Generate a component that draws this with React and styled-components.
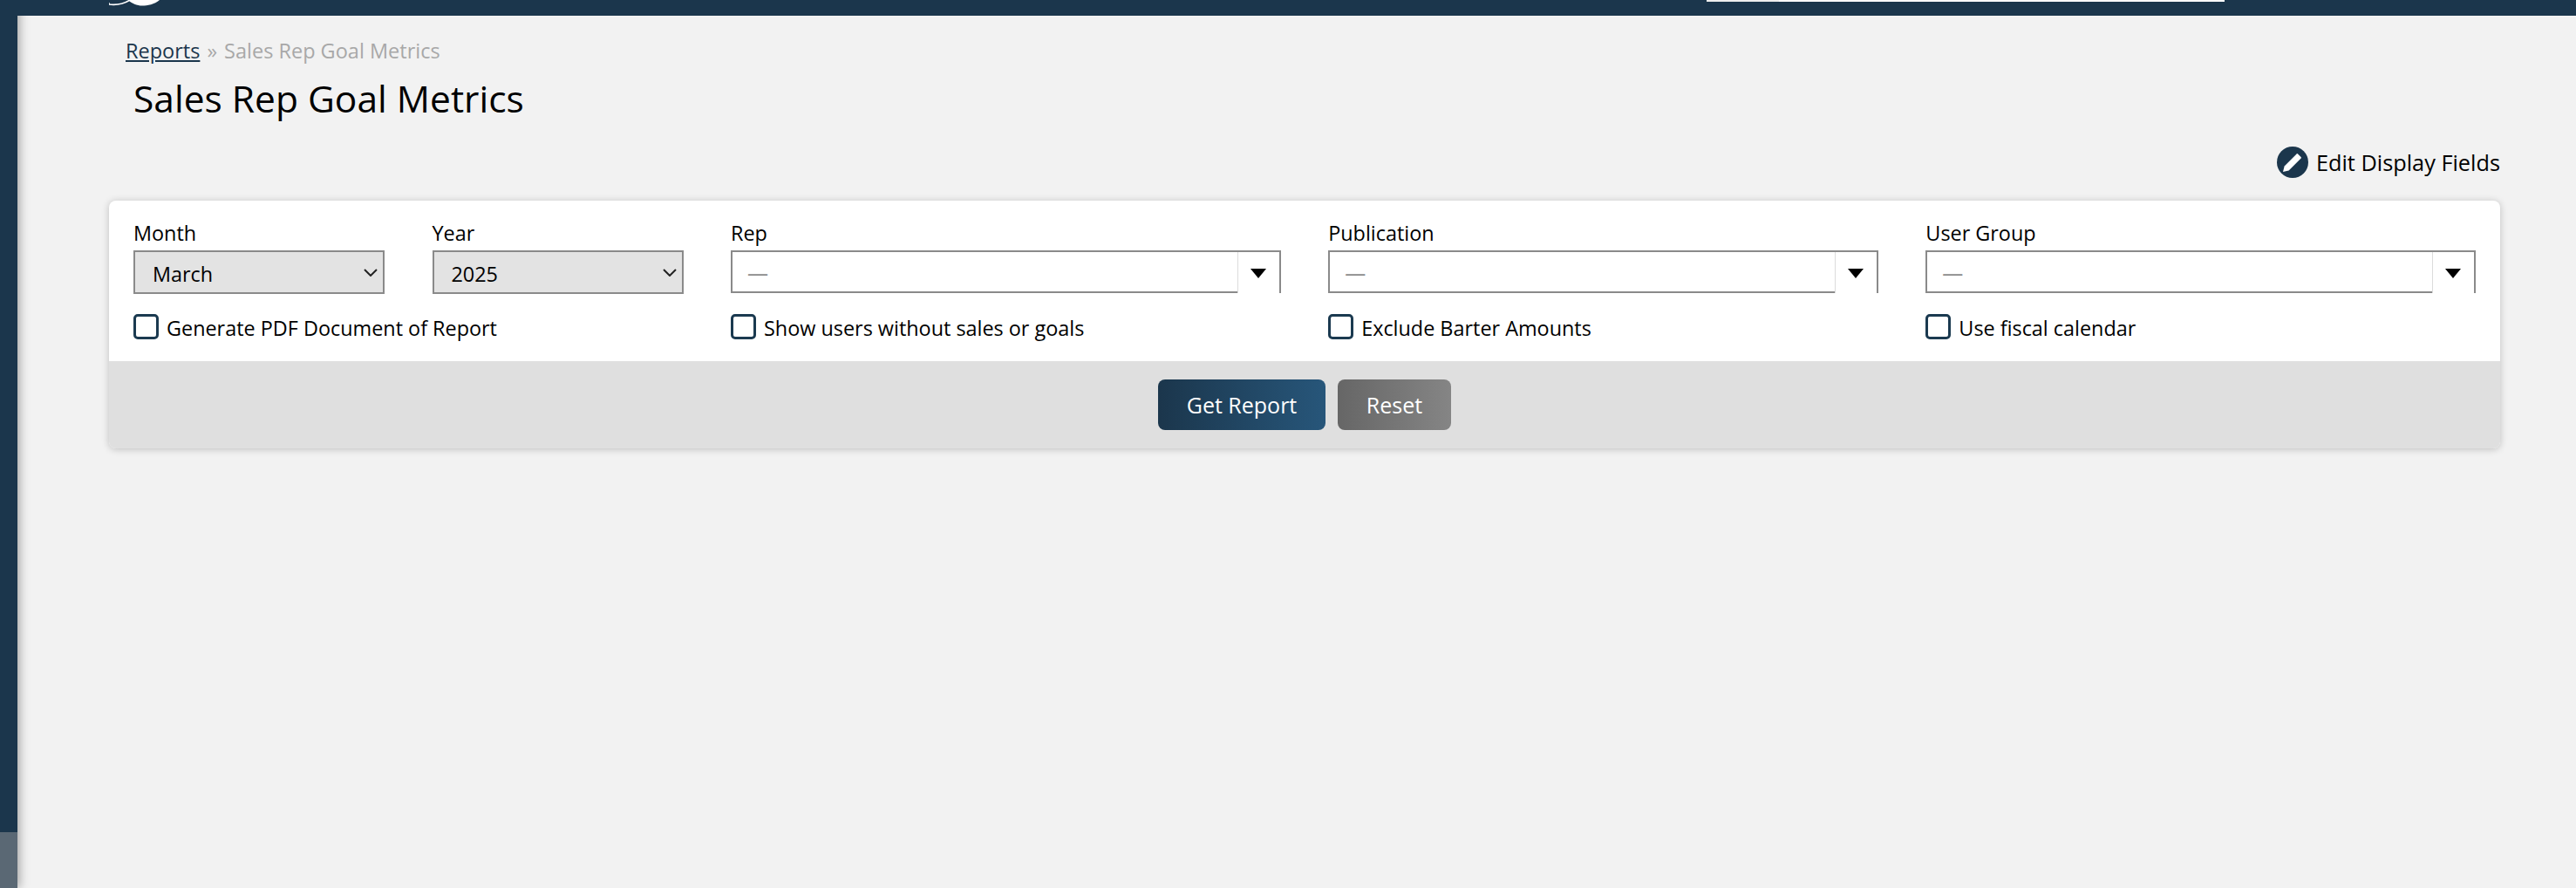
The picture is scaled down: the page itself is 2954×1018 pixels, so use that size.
import React from "react";
import styled, { createGlobalStyle } from "styled-components";

const Global = createGlobalStyle`
  html, body { margin: 0; padding: 0; background: #f2f2f2; }
  body { font-family: "Open Sans", "Noto Sans", sans-serif; color: #000; }
`;

const Shell = styled.div`
  display: flex;
  width: 2954px;
  height: 1018px;
  overflow: hidden;
  background: #f2f2f2;
`;

const Rail = styled.aside`
  flex: 0 0 20px;
  display: flex;
  flex-direction: column;
  justify-content: flex-end;
  background: #1b364c;
  box-shadow: 2px 0 12px rgba(0, 0, 0, 0.35);
  position: relative;
  z-index: 1;
`;

const RailFoot = styled.div`
  height: 64px;
  background: #5a6874;
`;

const Main = styled.main`
  flex: 1;
  display: flex;
  flex-direction: column;
  min-width: 0;
`;

const TopBar = styled.header`
  position: relative;
  z-index: 2;
  height: 18px;
  flex: none;
  background: #1b364c;
  display: flex;
  align-items: flex-start;
  padding-left: 105px;
  overflow: hidden;
`;

const Logo = styled.svg`
  width: 60px;
  height: 8px;
  flex: none;
`;

const SearchStub = styled.div`
  margin-left: 1772px;
  width: 594px;
  height: 2px;
  display: flex;
  background: #fff;
`;

const SearchLead = styled.div`
  width: 83px;
  background: #eeeeee;
`;

const Content = styled.div`
  padding: 24px 87px 0 105px;
  display: flex;
  flex-direction: column;
`;

const Breadcrumb = styled.nav`
  margin-left: 19px;
  font-size: 23.5px;
  line-height: 32px;
  color: #a8a8a8;
`;

const CrumbLink = styled.a`
  color: #1b364c;
  text-decoration: underline;
`;

const CrumbSep = styled.span`
  margin: 0 8px;
`;

const Title = styled.h1`
  margin: 10px 0 0 28px;
  font-size: 42.5px;
  line-height: 58px;
  font-weight: 400;
`;

const EditRow = styled.div`
  margin-top: 26px;
  display: flex;
  justify-content: flex-end;
  align-items: center;
  gap: 9px;
  height: 36px;
  font-size: 25.3px;
`;

const EditIcon = styled.svg`
  width: 36px;
  height: 36px;
  flex: none;
`;

const Card = styled.section`
  margin-top: 26px;
  height: 284px;
  background: #fff;
  border-radius: 8px;
  box-shadow: 0 1px 8px rgba(0, 0, 0, 0.22);
  overflow: hidden;
  display: flex;
  flex-direction: column;
`;

const Filters = styled.div`
  flex: 1;
  padding: 20px 28px 0;
  display: grid;
  grid-template-columns: 288px 288px 1fr 1fr 1fr;
  column-gap: 54.5px;
  align-content: start;
`;

const Field = styled.div`
  display: flex;
  flex-direction: column;
  min-width: 0;
`;

const FieldLabel = styled.label`
  font-size: 23.4px;
  line-height: 34px;
  margin-bottom: 3px;
`;

const SelectWrap = styled.div`
  position: relative;
  height: 50px;
`;

const NativeSelect = styled.select`
  appearance: none;
  width: 100%;
  height: 100%;
  box-sizing: border-box;
  margin: 0;
  padding: 3px 0 0 20px;
  background: #e3e3e3;
  border: 2px solid #8a8a8a;
  border-radius: 0;
  font: 400 23.4px "Open Sans", sans-serif;
  color: #000;
`;

const Chevron = styled.svg`
  position: absolute;
  right: 8px;
  top: 21px;
  width: 16px;
  height: 9px;
  pointer-events: none;
`;

const Combo = styled.div`
  display: flex;
  height: 49px;
`;

const ComboInput = styled.div`
  flex: 1;
  min-width: 0;
  box-sizing: border-box;
  border: 2px solid #8a8a8a;
  border-right: none;
  padding: 3px 0 0 17px;
  font-size: 24px;
  line-height: 42px;
  color: #8a8a8a;
  background: #fff;
`;

const ComboArrow = styled.div`
  flex: 0 0 50px;
  box-sizing: border-box;
  border-top: 2px solid #8a8a8a;
  border-right: 2px solid #8a8a8a;
  display: flex;
  align-items: center;
  justify-content: center;
  padding-top: 1px;
  position: relative;
  &::before {
    content: "";
    position: absolute;
    left: 0;
    top: 0;
    bottom: 0;
    width: 1px;
    background: #dcdcdc;
  }
`;

const Triangle = styled.svg`
  width: 18px;
  height: 11px;
`;

const CheckRow = styled.label`
  display: flex;
  align-items: center;
  gap: 9px;
  margin-top: 24px;
  font-size: 23.4px;
  line-height: 30px;
  white-space: nowrap;
`;

const CheckBox = styled.span`
  flex: none;
  width: 29px;
  height: 29px;
  box-sizing: border-box;
  border: 3px solid #1b3a50;
  border-radius: 5px;
  background: #fff;
  position: relative;
  top: -2px;
`;

const Footer = styled.div`
  flex: 0 0 100px;
  background: #dfdfdf;
  display: flex;
  justify-content: center;
  align-items: center;
  gap: 14px;
`;

const Button = styled.button`
  height: 58px;
  width: ${(p) => p.$w}px;
  border: none;
  border-radius: 8px;
  color: #fff;
  font: 400 25px "Open Sans", sans-serif;
  padding: 0;
  background: ${(p) => p.$bg};
`;

const chevron = (
  <Chevron viewBox="0 0 16 9">
    <path d="M1 1l7 7 7-7" fill="none" stroke="#222" strokeWidth="2" />
  </Chevron>
);

const Native = ({ label, value }) => (
  <Field>
    <FieldLabel>{label}</FieldLabel>
    <SelectWrap>
      <NativeSelect defaultValue={value}>
        <option>{value}</option>
      </NativeSelect>
      {chevron}
    </SelectWrap>
  </Field>
);

const ComboField = ({ label }) => (
  <Field>
    <FieldLabel>{label}</FieldLabel>
    <Combo>
      <ComboInput>—</ComboInput>
      <ComboArrow>
        <Triangle viewBox="0 0 18 11">
          <path d="M0 0h18L9 11z" fill="#000" />
        </Triangle>
      </ComboArrow>
    </Combo>
  </Field>
);

const Check = ({ label }) => (
  <CheckRow>
    <CheckBox />
    {label}
  </CheckRow>
);

export default function App() {
  return (
    <Shell>
      <Global />
      <Rail>
        <RailFoot />
      </Rail>
      <Main>
        <TopBar>
          <Logo viewBox="0 0 60 8">
            <path d="M0 5C8 6 16 5 24 0" fill="none" stroke="#fff" strokeWidth="1.6" />
            <path d="M0 5.5V3" stroke="#fff" strokeWidth="1.4" />
            <path d="M22 0h36C52 5 44 6.5 38 6.5 32 6.5 26 4 22 0z" fill="#fff" />
          </Logo>
          <SearchStub>
            <SearchLead />
          </SearchStub>
        </TopBar>
        <Content>
          <Breadcrumb>
            <CrumbLink>Reports</CrumbLink>
            <CrumbSep>»</CrumbSep>
            Sales Rep Goal Metrics
          </Breadcrumb>
          <Title>Sales Rep Goal Metrics</Title>
          <EditRow>
            <EditIcon viewBox="0 0 36 36">
              <circle cx="18" cy="18" r="18" fill="#1b364c" />
              <path d="M7 29l1.6-6.6L22.6 8.4a1 1 0 0 1 1.4 0l3.6 3.6a1 1 0 0 1 0 1.4L13.6 27.4z" fill="#fff" />
            </EditIcon>
            Edit Display Fields
          </EditRow>
          <Card>
            <Filters>
              <Native label="Month" value="March" />
              <Native label="Year" value="2025" />
              <ComboField label="Rep" />
              <ComboField label="Publication" />
              <ComboField label="User Group" />
              <Check label="Generate PDF Document of Report" />
              <span />
              <Check label="Show users without sales or goals" />
              <Check label="Exclude Barter Amounts" />
              <Check label="Use fiscal calendar" />
            </Filters>
            <Footer>
              <Button $w={192} $bg="linear-gradient(90deg, #1b364c, #27567a)">Get Report</Button>
              <Button $w={130} $bg="linear-gradient(90deg, #666666, #858585)">Reset</Button>
            </Footer>
          </Card>
        </Content>
      </Main>
    </Shell>
  );
}
